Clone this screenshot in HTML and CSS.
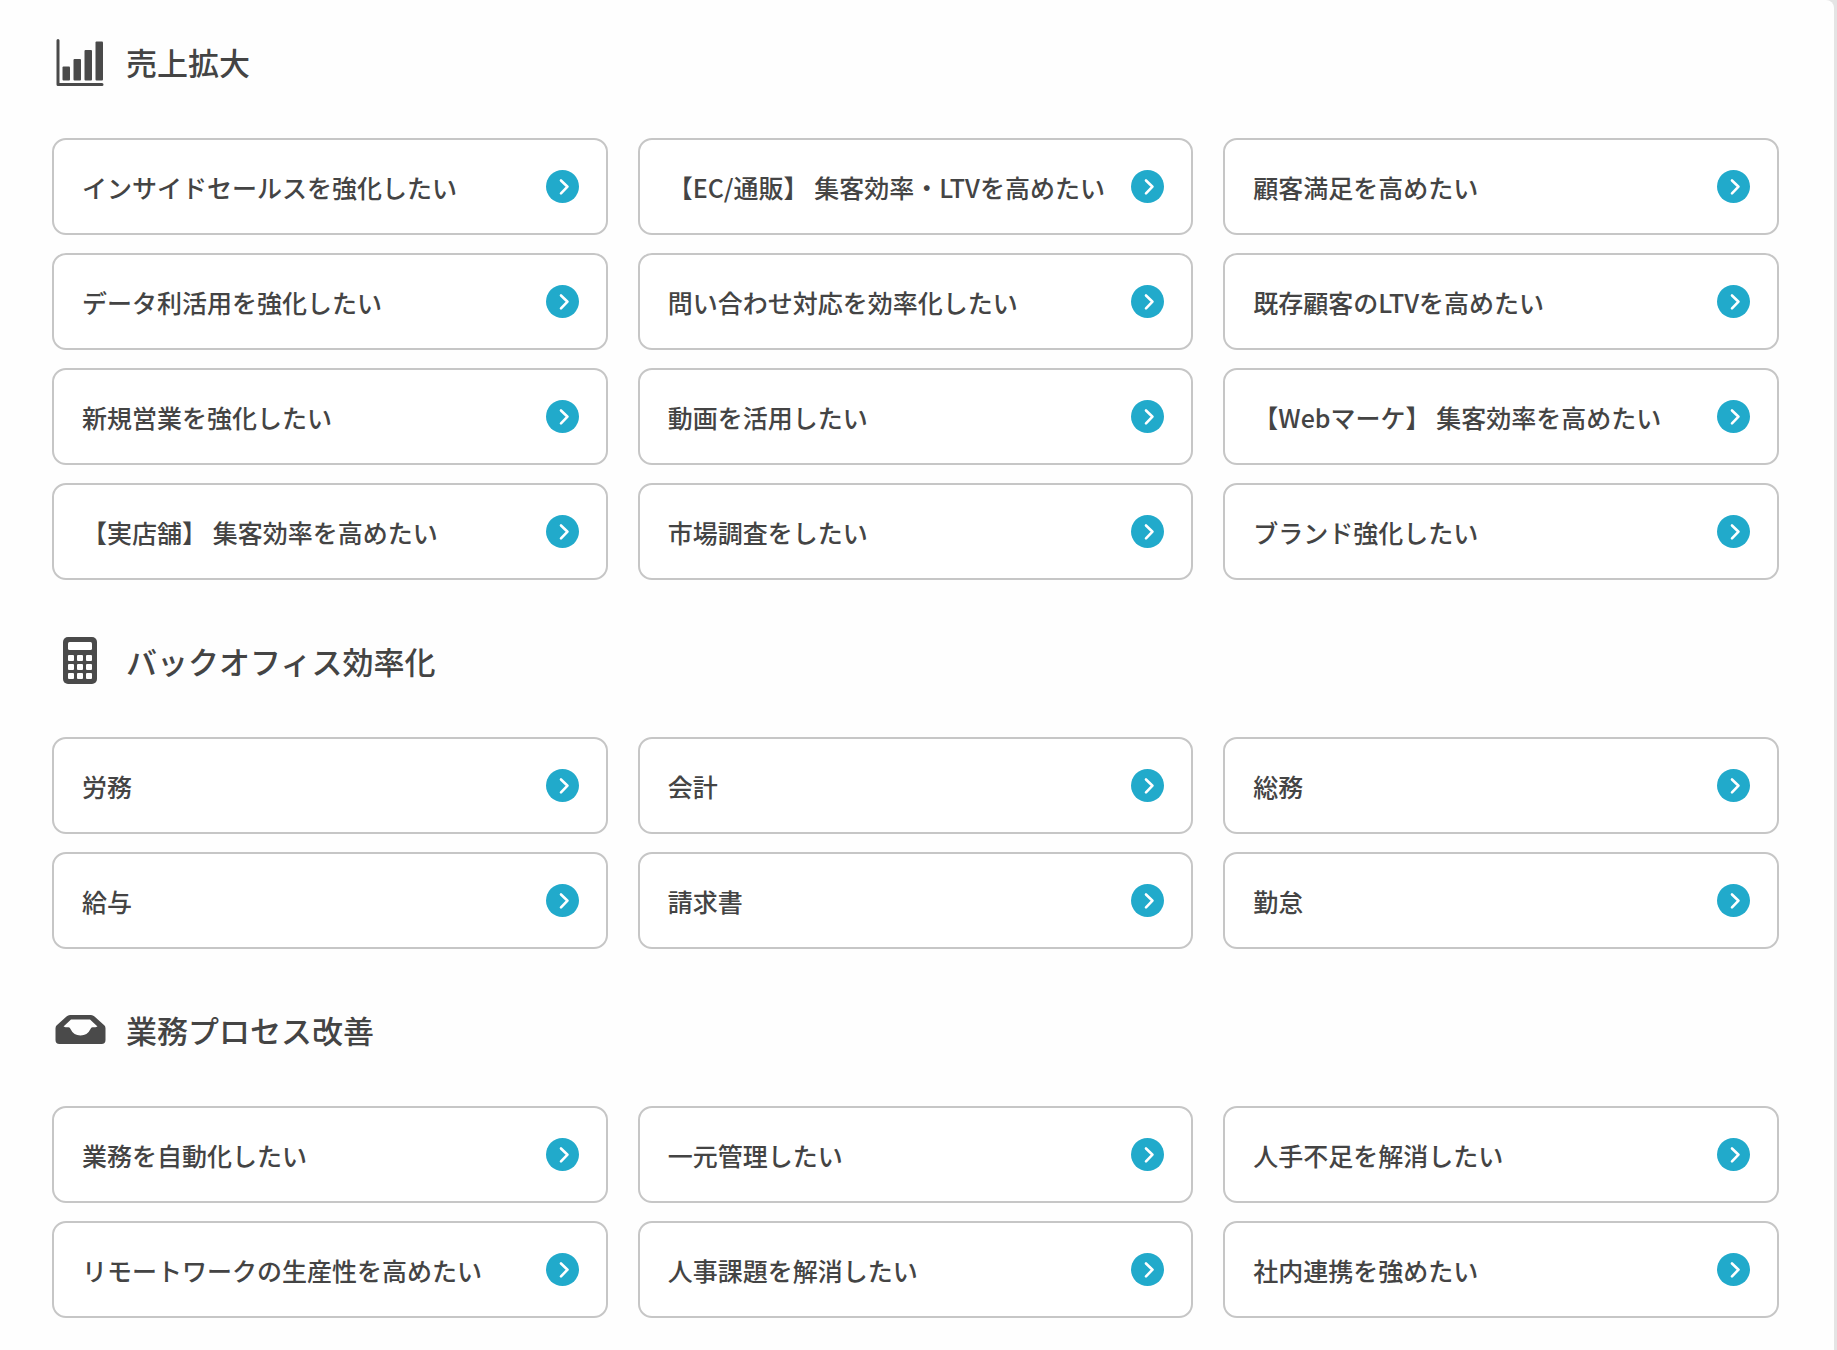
FILE: index.html
```html
<!DOCTYPE html>
<html lang="ja">
<head>
<meta charset="UTF-8">
<meta name="viewport" content="width=device-width, initial-scale=1.0">
<title>お悩みから探す</title>
<link rel="stylesheet" href="styles.css">
</head>
<body>
<!-- shared arrow -->
<svg class="defs" aria-hidden="true">
  <symbol id="arrow" viewBox="0 0 33 33">
    <circle cx="16.5" cy="16.5" r="16.5" fill="#21aacb"/>
    <path d="M15 10.5l6.5 6.2-6.5 6.6" fill="none" stroke="#fff" stroke-width="2.6" stroke-linecap="round" stroke-linejoin="round"/>
  </symbol>
</svg>
<main class="panel">
  <section class="category">
    <h2 class="category-title">
      <svg class="category-icon" viewBox="0 0 52 52" aria-hidden="true">
        <path d="M4 4.500v44h44" fill="none" stroke="#4a4a4a" stroke-width="3" stroke-linecap="round" stroke-linejoin="round"/>
        <g fill="#4a4a4a">
          <rect x="8.500" y="30.500" width="7.500" height="14" rx="1"/>
          <rect x="19.500" y="23" width="7.500" height="21.500" rx="1"/>
          <rect x="30.500" y="14" width="7.500" height="30.500" rx="1"/>
          <rect x="41.500" y="5.500" width="7.500" height="39" rx="1"/>
        </g>
      </svg>
      売上拡大
    </h2>
    <ul class="card-list">
      <li><a class="card" href="#">インサイドセールスを強化したい<svg class="arrow"><use href="#arrow"/></svg></a></li>
      <li><a class="card" href="#">【EC/通販】 集客効率・LTVを高めたい<svg class="arrow"><use href="#arrow"/></svg></a></li>
      <li><a class="card" href="#">顧客満足を高めたい<svg class="arrow"><use href="#arrow"/></svg></a></li>
      <li><a class="card" href="#">データ利活用を強化したい<svg class="arrow"><use href="#arrow"/></svg></a></li>
      <li><a class="card" href="#">問い合わせ対応を効率化したい<svg class="arrow"><use href="#arrow"/></svg></a></li>
      <li><a class="card" href="#">既存顧客のLTVを高めたい<svg class="arrow"><use href="#arrow"/></svg></a></li>
      <li><a class="card" href="#">新規営業を強化したい<svg class="arrow"><use href="#arrow"/></svg></a></li>
      <li><a class="card" href="#">動画を活用したい<svg class="arrow"><use href="#arrow"/></svg></a></li>
      <li><a class="card" href="#">【Webマーケ】 集客効率を高めたい<svg class="arrow"><use href="#arrow"/></svg></a></li>
      <li><a class="card" href="#">【実店舗】 集客効率を高めたい<svg class="arrow"><use href="#arrow"/></svg></a></li>
      <li><a class="card" href="#">市場調査をしたい<svg class="arrow"><use href="#arrow"/></svg></a></li>
      <li><a class="card" href="#">ブランド強化したい<svg class="arrow"><use href="#arrow"/></svg></a></li>
    </ul>
  </section>

  <section class="category">
    <h2 class="category-title">
      <svg class="category-icon" viewBox="0 0 52 52" aria-hidden="true">
        <rect x="9" y="2" width="34" height="47" rx="5" fill="#4a4a4a"/>
        <g fill="#fff">
          <rect x="14" y="7" width="24" height="8" rx="1.5"/>
          <rect x="14" y="20" width="6" height="6" rx="1"/>
          <rect x="23" y="20" width="6" height="6" rx="1"/>
          <rect x="32" y="20" width="6" height="6" rx="1"/>
          <rect x="14" y="29" width="6" height="6" rx="1"/>
          <rect x="23" y="29" width="6" height="6" rx="1"/>
          <rect x="32" y="29" width="6" height="6" rx="1"/>
          <rect x="14" y="38" width="6" height="6" rx="1"/>
          <rect x="23" y="38" width="6" height="6" rx="1"/>
          <rect x="32" y="38" width="6" height="6" rx="1"/>
        </g>
      </svg>
      バックオフィス効率化
    </h2>
    <ul class="card-list">
      <li><a class="card" href="#">労務<svg class="arrow"><use href="#arrow"/></svg></a></li>
      <li><a class="card" href="#">会計<svg class="arrow"><use href="#arrow"/></svg></a></li>
      <li><a class="card" href="#">総務<svg class="arrow"><use href="#arrow"/></svg></a></li>
      <li><a class="card" href="#">給与<svg class="arrow"><use href="#arrow"/></svg></a></li>
      <li><a class="card" href="#">請求書<svg class="arrow"><use href="#arrow"/></svg></a></li>
      <li><a class="card" href="#">勤怠<svg class="arrow"><use href="#arrow"/></svg></a></li>
    </ul>
  </section>

  <section class="category">
    <h2 class="category-title">
      <svg class="category-icon" viewBox="0 0 52 52" aria-hidden="true">
        <path fill="#4a4a4a" fill-rule="evenodd" d="M16 11h21q2 0 3.500 1.500l10 9q1 1 1 3V36q0 4-4 4h-42q-4 0-4-4V24.500q0-2 1-3l10-9Q14 11 16 11zM17 15.500L9.500 22.500l2 .8h3q1.500 0 2 1.700 3 6.500 10 6.500t10-6.500q.5-1.700 2-1.700h3l2-.8-7.500-7z"/>
      </svg>
      業務プロセス改善
    </h2>
    <ul class="card-list">
      <li><a class="card" href="#">業務を自動化したい<svg class="arrow"><use href="#arrow"/></svg></a></li>
      <li><a class="card" href="#">一元管理したい<svg class="arrow"><use href="#arrow"/></svg></a></li>
      <li><a class="card" href="#">人手不足を解消したい<svg class="arrow"><use href="#arrow"/></svg></a></li>
      <li><a class="card" href="#">リモートワークの生産性を高めたい<svg class="arrow"><use href="#arrow"/></svg></a></li>
      <li><a class="card" href="#">人事課題を解消したい<svg class="arrow"><use href="#arrow"/></svg></a></li>
      <li><a class="card" href="#">社内連携を強めたい<svg class="arrow"><use href="#arrow"/></svg></a></li>
    </ul>
  </section>
</main>
</body>
</html>
```
FILE: styles.css
```css
* {
  box-sizing: border-box;
}
body {
  margin: 0;
  background-color: #e4e4e4;
  color: #444;
  font-family: "Noto Sans CJK JP", sans-serif;
  font-weight: 500;
}
.defs {
  display: none;
}
.panel {
  min-height: 100vh;
  margin-right: 3px;
  padding: 36px 55px 32px 52px;
  border-top-right-radius: 8px;
  background-color: #fefefe;
}
.category + .category {
  margin-top: 55px;
}
.category-title {
  display: flex;
  align-items: center;
  gap: 20px;
  margin: 0 0 50px;
  padding-left: 2px;
  font-size: 31px;
  font-weight: 500;
  line-height: 52px;
}
.category-icon {
  width: 52px;
  height: 52px;
}
.card-list {
  display: grid;
  grid-template-columns: repeat(3, 1fr);
  gap: 18px 30px;
  margin: 0;
  padding: 0;
  list-style: none;
}
.card {
  display: flex;
  align-items: center;
  justify-content: space-between;
  min-height: 97px;
  padding: 0 27px 0 28px;
  border: 2px solid #c6c6c6;
  border-radius: 14px;
  background-color: #fff;
  color: inherit;
  font-size: 25px;
  line-height: 36px;
  text-decoration: none;
}
.card:hover {
  border-color: #21aacb;
}
.arrow {
  flex: none;
  width: 33px;
  height: 33px;
}

@media (max-width: 1200px) {
  .card-list {
    grid-template-columns: 1fr;
  }
}
```
